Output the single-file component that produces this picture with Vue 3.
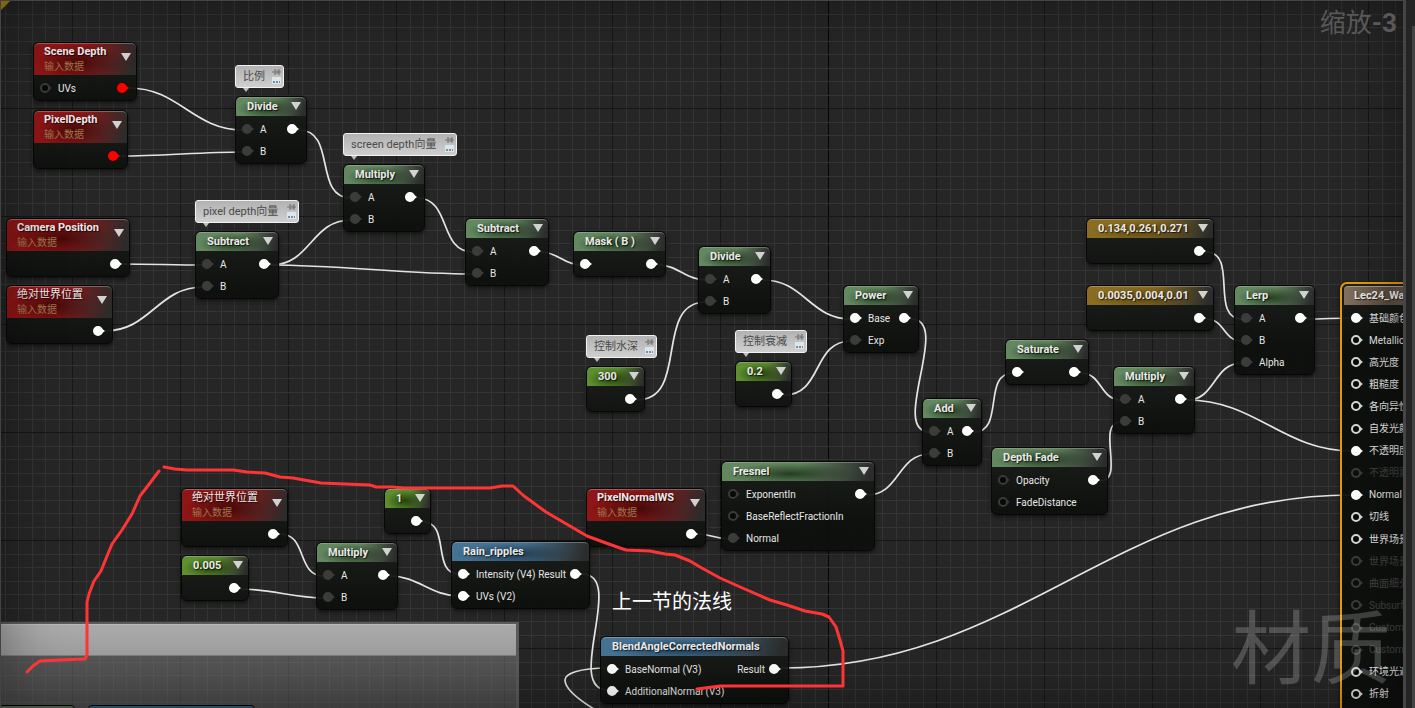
<script setup>
const lines = (origin, limit) => {
  const out = []
  for (let k = Math.ceil(-origin / 13.5); origin + k * 13.5 < limit; k++) {
    out.push({ at: Math.floor(origin + k * 13.5 + 0.5), major: k % 8 === 0 })
  }
  return out.sort((a, b) => a.major - b.major)
}
const columns = lines(72, 2600)
const rows = lines(0, 1600)

const nodes = [
  { title: 'Scene Depth', sub: '输入数据', kind: 'red', x: 33, y: 42, w: 104, rows: [{ in: 'UVs', pin: 'ring', out: 'hot' }] },
  { title: 'PixelDepth', sub: '输入数据', kind: 'red', x: 33, y: 110, w: 95, rows: [{ out: 'hot' }] },
  { title: 'Camera Position', sub: '输入数据', kind: 'red', x: 6, y: 218, w: 124, rows: [{ out: 'on' }] },
  { title: '绝对世界位置', sub: '输入数据', kind: 'red', cjk: true, x: 6, y: 285, w: 107, rows: [{ out: 'on' }] },
  { title: 'Divide', kind: 'green', x: 235, y: 96, w: 72, rows: [{ in: 'A', pin: 'dim', out: 'on' }, { in: 'B', pin: 'dim' }] },
  { title: 'Subtract', kind: 'green', x: 195, y: 231, w: 84, rows: [{ in: 'A', pin: 'dim', out: 'on' }, { in: 'B', pin: 'dim' }] },
  { title: 'Multiply', kind: 'green', x: 343, y: 164, w: 82, rows: [{ in: 'A', pin: 'dim', out: 'on' }, { in: 'B', pin: 'dim' }] },
  { title: 'Subtract', kind: 'green', x: 465, y: 218, w: 84, rows: [{ in: 'A', pin: 'dim', out: 'on' }, { in: 'B', pin: 'dim' }] },
  { title: 'Mask ( B )', kind: 'green', x: 573, y: 231, w: 93, rows: [{ in: '', pin: 'on', out: 'on' }] },
  { title: 'Divide', kind: 'green', x: 698, y: 246, w: 73, rows: [{ in: 'A', pin: 'dim', out: 'on' }, { in: 'B', pin: 'dim' }] },
  { title: '300', kind: 'lime', x: 586, y: 366, w: 59, rows: [{ out: 'on' }] },
  { title: '0.2', kind: 'lime', x: 735, y: 361, w: 57, rows: [{ out: 'on' }] },
  { title: 'Power', kind: 'green', x: 843, y: 285, w: 76, rows: [{ in: 'Base', pin: 'on', out: 'on' }, { in: 'Exp', pin: 'dim' }] },
  { title: 'Add', kind: 'green', x: 922, y: 398, w: 60, rows: [{ in: 'A', pin: 'dim', out: 'on' }, { in: 'B', pin: 'dim' }] },
  { title: 'Saturate', kind: 'green', x: 1005, y: 339, w: 84, rows: [{ in: '', pin: 'on', out: 'on' }] },
  { title: 'Multiply', kind: 'green', x: 1113, y: 366, w: 82, rows: [{ in: 'A', pin: 'dim', out: 'on' }, { in: 'B', pin: 'dim' }] },
  { title: 'Depth Fade', kind: 'green', x: 991, y: 447, w: 117, rows: [{ in: 'Opacity', pin: 'ring', out: 'on' }, { in: 'FadeDistance', pin: 'ring' }] },
  { title: '0.134,0.261,0.271', kind: 'gold', x: 1086, y: 218, w: 128, rows: [{ out: 'on' }] },
  { title: '0.0035,0.004,0.01', kind: 'gold', x: 1086, y: 285, w: 128, rows: [{ out: 'on' }] },
  { title: 'Lerp', kind: 'green', x: 1234, y: 285, w: 81, rows: [{ in: 'A', pin: 'dim', out: 'on' }, { in: 'B', pin: 'dim' }, { in: 'Alpha', pin: 'dim' }] },
  { title: 'Fresnel', kind: 'green', x: 721, y: 461, w: 154, rows: [{ in: 'ExponentIn', pin: 'ring', out: 'on' }, { in: 'BaseReflectFractionIn', pin: 'ring' }, { in: 'Normal', pin: 'dim' }] },
  { title: 'PixelNormalWS', sub: '输入数据', kind: 'red', x: 586, y: 488, w: 120, rows: [{ out: 'on' }] },
  { title: '绝对世界位置', sub: '输入数据', kind: 'red', cjk: true, x: 181, y: 488, w: 107, rows: [{ out: 'on' }] },
  { title: '0.005', kind: 'lime', x: 181, y: 555, w: 68, rows: [{ out: 'on' }] },
  { title: '1', kind: 'lime', x: 384, y: 488, w: 47, rows: [{ out: 'on' }] },
  { title: 'Multiply', kind: 'green', x: 316, y: 542, w: 82, rows: [{ in: 'A', pin: 'dim', out: 'on' }, { in: 'B', pin: 'dim' }] },
  { title: 'Rain_ripples', kind: 'blue', plain: true, x: 451, y: 541, w: 139, rows: [{ in: 'Intensity (V4)', pin: 'on', outLabel: 'Result', out: 'on' }, { in: 'UVs (V2)', pin: 'on' }] },
  { title: 'BlendAngleCorrectedNormals', kind: 'blue', plain: true, x: 600, y: 636, w: 189, rows: [{ in: 'BaseNormal (V3)', pin: 'on', outLabel: 'Result', out: 'on' }, { in: 'AdditionalNormal (V3)', pin: 'on' }] },
]

const notes = [
  { text: '比例', x: 235, y: 65, w: 49 },
  { text: 'screen depth向量', x: 343, y: 133, w: 114 },
  { text: 'pixel depth向量', x: 195, y: 200, w: 104 },
  { text: '控制水深', x: 586, y: 335, w: 71 },
  { text: '控制衰减', x: 735, y: 330, w: 72 },
]

const outputs = [
  { label: '基础颜色', pin: 'on' },
  { label: 'Metallic', pin: 'open', latin: true },
  { label: '高光度', pin: 'open' },
  { label: '粗糙度', pin: 'open' },
  { label: '各向异性', pin: 'open' },
  { label: '自发光颜色', pin: 'open' },
  { label: '不透明度', pin: 'on' },
  { label: '不透明蒙版', pin: 'open', off: true },
  { label: 'Normal', pin: 'on', latin: true },
  { label: '切线', pin: 'open' },
  { label: '世界场景位置偏移', pin: 'open' },
  { label: '世界场景位移', pin: 'open', off: true },
  { label: '曲面细分乘数', pin: 'open', off: true },
  { label: 'Subsurface Color', pin: 'open', latin: true, off: true },
  { label: 'Custom Data 0', pin: 'open', latin: true, off: true },
  { label: 'Custom Data 1', pin: 'open', latin: true, off: true },
  { label: '环境光遮挡', pin: 'open' },
  { label: '折射', pin: 'open' },
]

const links = [
  [129, 88, 243, 130], [120, 156, 243, 152],
  [122, 264, 203, 265], [105, 331, 203, 287],
  [299, 130, 351, 198], [271, 265, 351, 220], [271, 265, 473, 274],
  [417, 198, 473, 252], [541, 252, 581, 265], [658, 265, 706, 280],
  [637, 400, 706, 302], [763, 280, 851, 319], [784, 395, 851, 341],
  [911, 319, 930, 432], [867, 495, 930, 454], [974, 432, 1013, 373],
  [1081, 373, 1121, 400], [1100, 481, 1121, 422],
  [1206, 252, 1242, 319], [1206, 319, 1242, 341], [1187, 400, 1242, 363],
  [1307, 319, 1352, 318], [1187, 400, 1352, 451], [781, 668, 1352, 495],
  [280, 534, 324, 576], [241, 589, 324, 598], [423, 522, 459, 574],
  [390, 576, 459, 596], [582, 574, 608, 690], [698, 534, 729, 539],
]
const curve = ([x1, y1, x2, y2]) => {
  const t = Math.round((Math.abs(x2 - x1) + Math.abs(y2 - y1)) * 0.32)
  return `M${x1} ${y1} C${x1 + t} ${y1} ${x2 - t} ${y2} ${x2} ${y2}`
}

const place = (n) => ({ left: n.x + 'px', top: n.y + 'px', width: n.w + 'px' })
</script>

<template>
  <main class="editor">
    <section class="canvas" aria-label="材质图表">
      <svg class="layer grid" aria-hidden="true">
        <rect v-for="(l, i) in columns" :key="'c' + i" :x="l.at" y="0" width="1" height="100%" :class="{ major: l.major, axis: l.at === 828 }" />
        <rect v-for="(l, i) in rows" :key="'r' + i" x="0" :y="l.at" width="100%" height="1" :class="{ major: l.major }" />
      </svg>

      <div class="group"><div class="group-head"></div></div>
      <div class="stub stub-green"></div>
      <div class="stub stub-blue"></div>

      <svg class="layer wires" aria-hidden="true">
        <path v-for="(l, i) in links" :key="i" :d="curve(l)" />
        <path d="M608 668 C578 668 565 674 565 680 C565 688 576 698 594 709" />
      </svg>

      <aside v-for="n in notes" :key="n.text" class="note" :style="place(n)">
        <span>{{ n.text }}</span>
        <svg width="9" height="18" viewBox="0 0 9 18" aria-hidden="true">
          <path d="M0 4h3M3 1v6M3 3h3v2H3M7 1v6M7 4h2" fill="none" stroke="#777" stroke-width="1.2" />
          <rect x="0" y="9" width="9" height="7" fill="#dfe6ea" />
          <path d="M1 14h2M4 14h2M7 14h1" stroke="#47759b" stroke-width="1.4" />
        </svg>
      </aside>

      <article v-for="(n, i) in nodes" :key="i" class="node" :class="n.kind" :style="place(n)">
        <header :class="{ tall: n.sub }">
          <div class="names">
            <h2 :class="{ cjk: n.cjk }">{{ n.title }}</h2>
            <p v-if="n.sub">{{ n.sub }}</p>
          </div>
          <button v-if="!n.plain" type="button" :aria-label="n.title">
            <svg width="10" height="8" viewBox="0 0 10 8"><path d="M0 0h10L5 8z" fill="#d2d2d2" /></svg>
          </button>
        </header>
        <div class="pins">
          <div v-for="(r, k) in n.rows" :key="k" class="row">
            <svg v-if="r.pin" class="pin" :class="r.pin" width="12" height="10" viewBox="0 0 12 10">
              <path d="M8 2l4 3-4 3z" /><circle cx="5" cy="5" r="4" />
            </svg>
            <span v-if="r.in" class="label">{{ r.in }}</span>
            <span class="fill"></span>
            <span v-if="r.outLabel" class="out-label">{{ r.outLabel }}</span>
            <svg v-if="r.out" class="pin" :class="r.out" width="12" height="10" viewBox="0 0 12 10">
              <path d="M8 2l4 3-4 3z" /><circle cx="5" cy="5" r="4" />
            </svg>
          </div>
        </div>
      </article>

      <article class="result">
        <header><h2>Lec24_Water</h2></header>
        <div class="pins">
          <div v-for="(o, i) in outputs" :key="i" class="row" :class="{ off: o.off }">
            <svg class="pin" :class="o.pin" width="12" height="10" viewBox="0 0 12 10">
              <path d="M8 2l4 3-4 3z" /><circle cx="5" cy="5" r="4" />
            </svg>
            <span class="label">{{ o.label }}</span>
          </div>
        </div>
      </article>

      <div class="vignette"></div>
      <p class="watermark">材质</p>
      <p class="zoom">缩放<b>-3</b></p>
      <svg class="layer ink" aria-hidden="true">
        <polyline points="27,672 33,666 40,661 60,660 85,659 87,655 87,602 89,594 94,581 101,571 105,561 112,544 122,530 132,514 140,496 150,483 159,471" />
        <polyline points="164,467 175,469 187,470 233,470 247,472 265,473 280,477 293,478 321,483 370,485 376,487 392,487 404,488 490,488 502,486 513,486 524,496 546,512 587,536 606,543 620,548 626,550 650,551 665,554 675,555 690,561 700,567 720,578 747,590 770,600 787,605 805,611 822,614 829,617 836,627 840,640 843,651 843,686 720,686 697,689" />
      </svg>
      <p class="remark">上一节的法线</p>
    </section>
    <div class="rail"></div>
    <div class="gutter"><div class="thumb"></div></div>
  </main>
</template>

<style>
body { margin: 0; background: #262626; }
</style>

<style scoped>
.editor {
  display: flex;
  height: 100vh;
  overflow: hidden;
  background: #242424;
  color: #e6e6e6;
  font: 11px/14px Roboto, "Noto Sans CJK SC", sans-serif;
}
.canvas { position: relative; flex: 1; min-width: 0; overflow: hidden; background: #262626; }
.layer { position: absolute; inset: 0; width: 100%; height: 100%; }
.grid rect { fill: #343434; }
.grid rect.major { fill: #161616; }
.grid rect.axis { fill: #050505; }
.wires path { fill: none; stroke: #e4e4e4; stroke-width: 1.7; }
.ink polyline { fill: none; stroke: #ff3535; stroke-width: 3; stroke-linejoin: round; stroke-linecap: round; }
.rail { width: 3px; background: #454545; }
.gutter { display: flex; width: 9px; justify-content: flex-end; background: #242424; }
.thumb { width: 3px; margin-top: 26px; background: #444; }

.group {
  position: absolute;
  left: -2px;
  top: 622px;
  bottom: -4px;
  width: 516px;
  border: 2px solid #5a5a5a;
  border-right-width: 3px;
  background: linear-gradient(rgba(140, 140, 140, .52), rgba(110, 110, 110, .5) 90px);
}
.group-head { height: 30px; border-top: 1px solid #b8b8b8; border-bottom: 1px solid #7d7d7d; background: linear-gradient(#aaa, #9e9e9e); }
.stub { position: absolute; top: 705px; height: 12px; border: 1px solid #050505; border-radius: 4px; }
.stub-green { left: -8px; width: 81px; background: #5c6b59; }
.stub-blue { left: 88px; width: 165px; background: #2c5f79; }

.note {
  position: absolute;
  display: flex;
  align-items: center;
  justify-content: space-between;
  box-sizing: border-box;
  height: 23px;
  padding: 0 2px 0 7px;
  border: 1px solid #f2f2f2;
  border-radius: 3px;
  background: linear-gradient(#b2b2b2, #cfcfcf);
  color: #4a4a4a;
  white-space: nowrap;
}
.note::after {
  content: "";
  position: absolute;
  left: 7px;
  top: 22px;
  border: 3px solid transparent;
  border-top: 4px solid #bdbdbd;
}

.node, .result {
  position: absolute;
  box-sizing: border-box;
  border: 1px solid #070707;
  border-radius: 6px;
  background: linear-gradient(rgba(27, 30, 27, .94), rgba(13, 15, 13, .94) 60px);
  box-shadow: 0 0 1px rgba(0, 0, 0, .6), 0 2px 4px rgba(0, 0, 0, .5);
}
.node header {
  display: flex;
  justify-content: space-between;
  align-items: center;
  box-sizing: border-box;
  height: 19px;
  padding: 0 5px 0 11px;
  border-top: 1px solid rgba(200, 200, 200, .4);
  border-radius: 5px 5px 0 0;
  background:
    linear-gradient(105deg, transparent 50%, #2b2c2b 96%),
    radial-gradient(ellipse 42% 60% at 45% 60%, var(--deep), transparent),
    var(--tint);
}
.node header.tall { height: 32px; padding-left: 10px; }
.green { --tint: #63885f; --deep: #243d22; }
.red { --tint: #8f1616; --deep: #450909; }
.lime { --tint: #5d8f2f; --deep: #24420a; }
.gold { --tint: #8a6d20; --deep: #5a4510; }
.blue { --tint: #467393; --deep: #1d3a50; }
h2 { margin: 0; font-size: 11px; line-height: 14px; font-weight: 700; color: #e9e9e9; white-space: nowrap; text-shadow: 1px 1px 1px rgba(0, 0, 0, .7); }
h2.cjk { font-weight: 400; }
.names p { margin: 0; font-size: 10px; line-height: 16px; color: #a0754c; }
button { display: flex; padding: 0 0 2px; border: 0; background: none; }
.tall button { padding-bottom: 5px; }
.pins { padding: 2px 0 1px; font-size: 10px; }
.row { display: flex; align-items: center; height: 22px; padding: 0 7px 0 6px; white-space: nowrap; }
.label, .out-label { padding-top: 1px; }
.label { margin-left: 6px; }
.fill { flex: 1; }
.out-label { margin-right: 4px; }
.pin { flex: none; overflow: visible; }
.pin circle { stroke-width: 2; }
.on { fill: #fff; stroke: #fff; }
.hot { fill: #f00; stroke: #f00; }
.dim { fill: #3c3c3c; stroke: #3c3c3c; }
.ring { fill: #333; stroke: #3a3a3a; }
.ring circle { fill: #080808; }
.open { fill: #d8d8d8; stroke: #d8d8d8; }
.open circle { fill: #0a0a0a; }
.pin path { stroke: none; }

.result { left: 1340px; top: 282px; width: 200px; border: 2px solid #e69a00; padding: 2px 2px 20px; border-radius: 7px; }
.result header {
  height: 18px;
  padding-left: 10px;
  border-top: 1px solid #a99a8b;
  border-radius: 4px 4px 0 0;
  background: linear-gradient(90deg, #84705d, #5a4b3e 45px, #84705d 90px);
}
.result h2 { line-height: 18px; }
.result .pins { display: flex; flex-direction: column; justify-content: space-between; height: 398px; }
.result .row { padding-left: 7px; }
.off { opacity: .22; }

.vignette {
  position: absolute;
  inset: 0;
  border-left: 1px solid #444;
  border-top: 1px solid #444;
  box-shadow: inset 0 0 60px rgba(0, 0, 0, .4);
  background: linear-gradient(135deg, #b58a18 6px, transparent 7px);
  pointer-events: none;
}
.watermark, .zoom, .remark { position: absolute; margin: 0; white-space: nowrap; }
.watermark { right: 12px; bottom: 8px; font-size: 80px; line-height: 100px; color: rgba(255, 255, 255, .2); }
.zoom { right: 6px; top: 7px; font-size: 26px; line-height: 32px; color: #585858; }
.remark { left: 612px; top: 588px; font-size: 20px; line-height: 28px; color: #fff; }
</style>
